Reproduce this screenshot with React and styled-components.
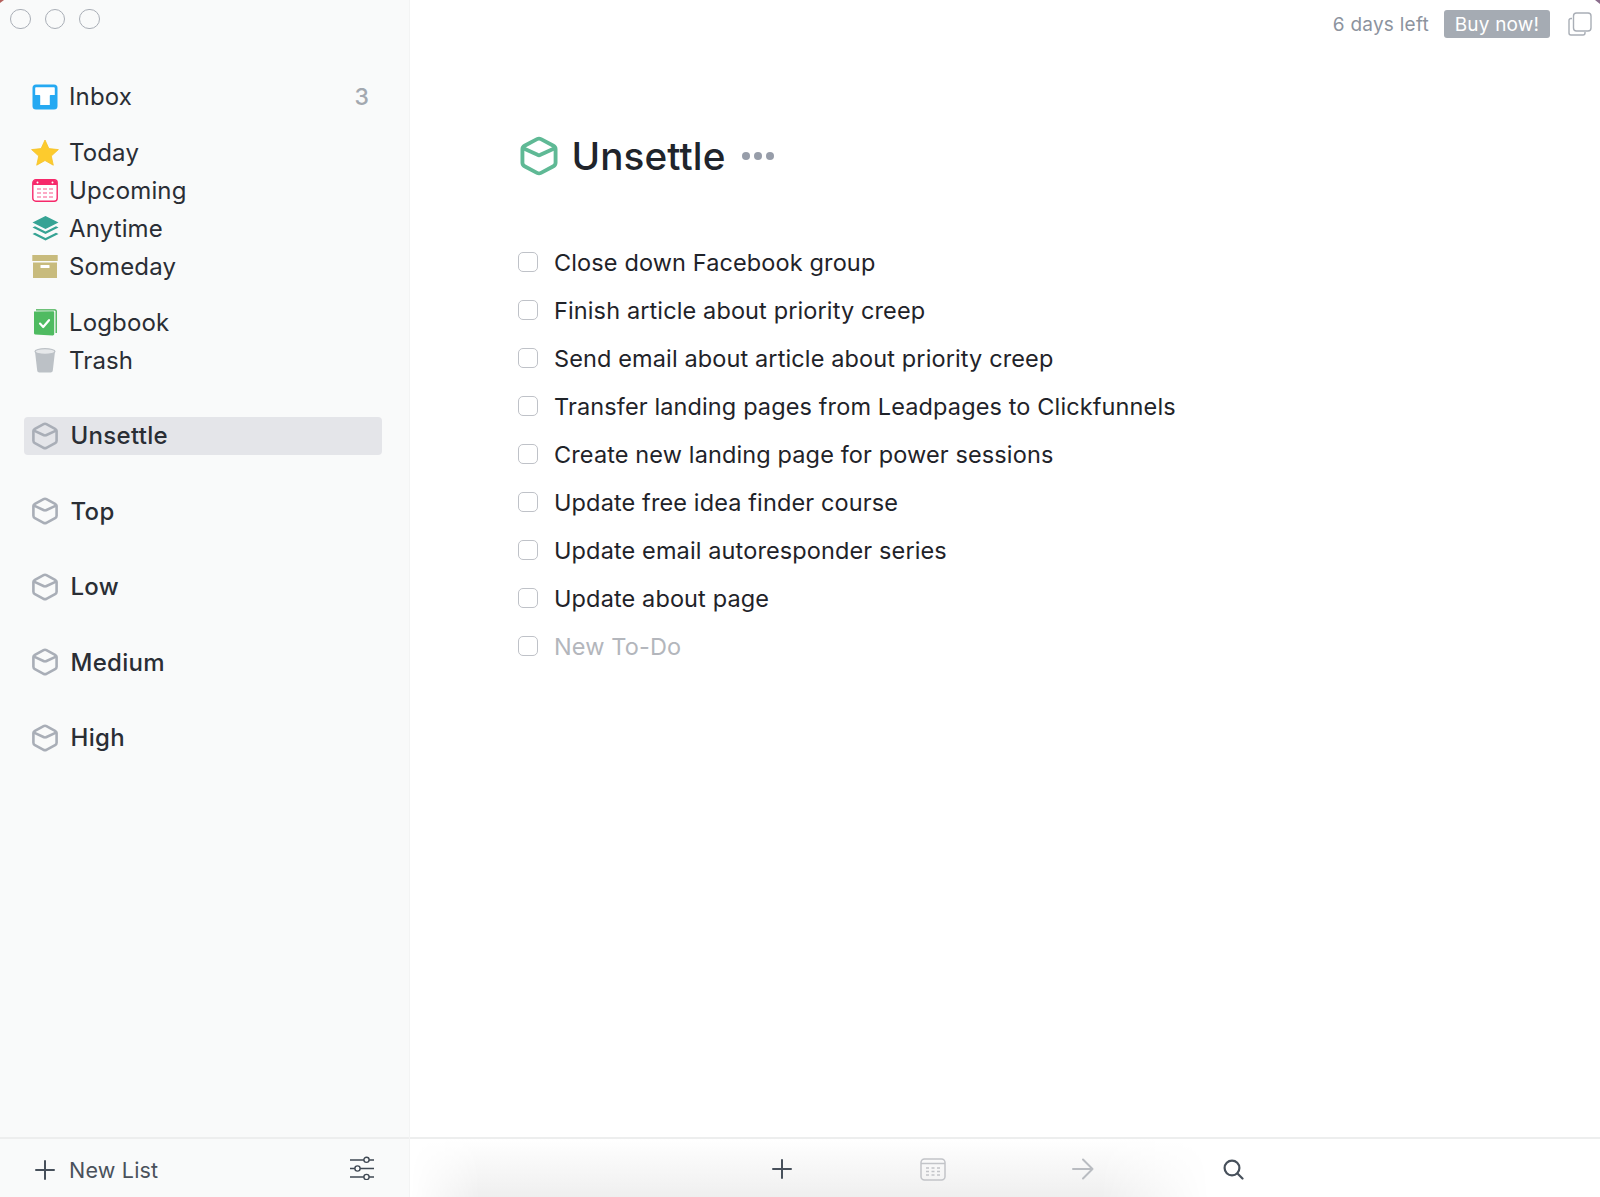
import React from "react";
import styled, { createGlobalStyle } from "styled-components";

const GlobalStyle = createGlobalStyle`
	html, body {
		margin: 0;
		padding: 0;
		background: #ffffff;
	}
	body {
		font-family: Inter, "Noto Sans", "Liberation Sans", sans-serif;
		color: #23272e;
		overflow: hidden;
	}
`;

const Window = styled.div`
	position: relative;
	display: grid;
	grid-template-columns: 410px 1fr;
	width: 1600px;
	height: 1197px;

	&:before,
	&:after {
		content: "";
		position: absolute;
		top: 0;
		width: 0;
		height: 0;
		border-style: solid;
	}
	&:before {
		left: 0;
		border-width: 3px 4px 0 0;
		border-color: #b5605c transparent transparent transparent;
	}
	&:after {
		right: 0;
		border-width: 0 5px 4px 0;
		border-color: transparent #8b6d8c transparent transparent;
	}
`;

const Sidebar = styled.aside`
	display: flex;
	flex-direction: column;
	background: #f9fafa;
	border-right: 1px solid #f3f4f4;
	box-sizing: border-box;
`;

const Lights = styled.div`
	display: flex;
	gap: 14px;
	padding: 8.5px 0 0 10px;
	height: 77.7px;
	box-sizing: border-box;
`;

const Light = styled.span`
	width: 20.5px;
	height: 20.5px;
	box-sizing: border-box;
	border: 1.5px solid #a9aeb6;
	border-radius: 50%;
`;

const Nav = styled.nav`
	flex: 1;
	display: flex;
	flex-direction: column;
	padding: 0 27px 0 24px;
`;

const NavGroup = styled.div`
	display: flex;
	flex-direction: column;
	margin-bottom: ${(p) => p.$gap || 18.5}px;
`;

const NavRow = styled.div`
	display: flex;
	align-items: center;
	height: ${(p) => (p.$list ? 38 : 37.75)}px;
	padding: 0 13px 0 6px;
	border-radius: 4px;
	background: ${(p) => (p.$active ? "#e4e5e9" : "transparent")};
`;

const IconSlot = styled.span`
	display: flex;
	justify-content: center;
	align-items: center;
	width: 30px;
	margin-right: ${(p) => (p.$list ? 10.5 : 9)}px;
`;

const NavLabel = styled.span`
	flex: 1;
	font-size: 24px;
	letter-spacing: ${(p) => (p.$list ? 0.3 : 0.14)}px;
	font-weight: ${(p) => (p.$list ? 500 : 400)};
	color: #2a2e35;
`;

const Count = styled.span`
	font-size: 23px;
	font-weight: 500;
	color: #a3a8af;
`;

const SideFooter = styled.div`
	display: flex;
	align-items: center;
	justify-content: space-between;
	height: 60px;
	box-sizing: border-box;
	border-top: 2px solid #edeeee;
	padding: 0 35px 0 35px;
`;

const NewList = styled.div`
	display: flex;
	align-items: center;
	gap: 14px;
	padding-top: 3px;
	font-size: 21.5px;
	letter-spacing: 0.2px;
	color: #4a515b;
`;

const Main = styled.main`
	display: flex;
	flex-direction: column;
	background: #ffffff;
	min-width: 0;
`;

const TopBar = styled.header`
	display: flex;
	justify-content: flex-end;
	align-items: center;
	height: 48px;
	padding-right: 8px;
	gap: 15px;
`;

const Trial = styled.span`
	font-size: 19px;
	letter-spacing: 0.25px;
	color: #8c939e;
`;

const BuyButton = styled.button`
	width: 106px;
	height: 28px;
	margin-right: 3px;
	border: 0;
	border-radius: 3px;
	padding: 0;
	background: #a5abb3;
	color: #ffffff;
	font-family: inherit;
	font-size: 19px;
	font-weight: 400;
	letter-spacing: 0.2px;
`;

const Content = styled.section`
	flex: 1;
	padding: 88px 0 0 109px;
`;

const TitleRow = styled.div`
	display: flex;
	align-items: center;
	height: 40px;
	margin-bottom: 62px;
`;

const Title = styled.h1`
	margin: 0 16px 0 12.5px;
	font-size: 38.7px;
	font-weight: 500;
	letter-spacing: 0.1px;
	color: #20242b;
`;

const Dots = styled.span`
	display: flex;
	gap: 4px;
`;

const Dot = styled.i`
	width: 8px;
	height: 8px;
	border-radius: 50%;
	background: #979da9;
`;

const TaskList = styled.ul`
	margin: 0;
	padding: 0;
	list-style: none;
`;

const Task = styled.li`
	display: flex;
	align-items: center;
	height: 48px;
	gap: 16px;
	font-size: 23.5px;
	letter-spacing: 0.12px;
	color: ${(p) => (p.$placeholder ? "#b3b6bc" : "#1f2329")};
`;

const Check = styled.span`
	width: 20px;
	height: 20px;
	margin-left: -1px;
	box-sizing: border-box;
	border: 1.8px solid #bfc2c8;
	border-radius: 5px;
	background: #ffffff;
`;

const Toolbar = styled.footer`
	position: relative;
	display: flex;
	align-items: center;
	height: 60px;
	box-sizing: border-box;
	border-top: 2px solid #edeeee;
	padding: 2px 0 0 297px;
	overflow: hidden;

	&:before {
		content: "";
		position: absolute;
		left: 0;
		width: 800px;
		top: 0;
		bottom: 0;
		background: linear-gradient(#ffffff, #efefef);
		mask-image: linear-gradient(to right, transparent, #000 70px, #000 690px, transparent);
	}
`;

const ToolButton = styled.span`
	position: relative;
	display: flex;
	justify-content: center;
	width: 150.5px;
`;

const BoxIcon = ({ size = 28, color = "#a9aeb7", width = 2.6 }) => (
	<svg width={size} height={size} viewBox="0 0 28 28" fill="none" stroke={color} strokeWidth={width} strokeLinejoin="round" strokeLinecap="round">
		<path d="M12.6 2.2c.9-.5 1.9-.5 2.8 0l8.7 4.6c.9.5 1.5 1.4 1.5 2.4v9.6c0 1-.6 1.9-1.5 2.4l-8.7 4.6c-.9.5-1.9.5-2.8 0l-8.7-4.6c-.9-.5-1.5-1.4-1.5-2.4V9.2c0-1 .6-1.9 1.5-2.4Z" />
		<path d="M3 8.6 13 13.2c.6.3 1.4.3 2 0L25 8.6" />
	</svg>
);

const InboxIcon = () => (
	<svg width="26" height="26" viewBox="0 0 26 26">
		<rect x="0.5" y="0.5" width="25" height="25" rx="3.5" fill="#25a9f2" />
		<path d="M3.2 4.2c0-.6.4-1 1-1h17.6c.6 0 1 .4 1 1v6.8h-4.3c-.4 0-.7.3-.7.7v9.3H8.2v-9.3c0-.4-.3-.7-.7-.7H3.2Z" fill="#ffffff" />
	</svg>
);

const StarIcon = () => (
	<svg width="28" height="27" viewBox="0 0 28 27">
		<path d="M14 1 17.9 9.6 27.4 10.6 20.3 17 22.3 26.2 14 21.5 5.7 26.2 7.7 17 .6 10.6 10.1 9.6Z" fill="#fdcb2d" stroke="#f5c228" strokeWidth="0.8" strokeLinejoin="round" />
	</svg>
);

const CalendarIcon = () => (
	<svg width="26" height="23" viewBox="0 0 26 23">
		<rect x="0.8" y="0.8" width="24.4" height="21.4" rx="3" fill="#ffffff" stroke="#f6286a" strokeWidth="1.4" />
		<path d="M1 3.6A3 3 0 0 1 4 1h18a3 3 0 0 1 3 2.6V6H1Z" fill="#f6286a" />
		<g fill="#ffffff">
			<rect x="4.5" y="2.5" width="2" height="2" rx="1" />
			<rect x="19.5" y="2.5" width="2" height="2" rx="1" />
		</g>
		<g fill="#fcaac5">
			<rect x="5" y="9" width="4" height="2" />
			<rect x="11" y="9" width="4" height="2" />
			<rect x="17" y="9" width="4" height="2" />
			<rect x="5" y="13" width="4" height="2" />
			<rect x="11" y="13" width="4" height="2" />
			<rect x="17" y="13" width="4" height="2" />
			<rect x="5" y="17" width="4" height="2" />
			<rect x="11" y="17" width="4" height="2" />
			<rect x="17" y="17" width="4" height="2" />
		</g>
	</svg>
);

const StackIcon = () => (
	<svg width="27" height="25" viewBox="0 0 27 25">
		<path d="M13.5 0 26.5 6.5 13.5 13 .5 6.5Z" fill="#36a394" />
		<path d="M.5 11.5 3 10.2 13.5 15.5 24 10.2 26.5 11.5 13.5 18Z" fill="#36a394" />
		<path d="M.5 18 3 16.7 13.5 22 24 16.7 26.5 18 13.5 24.5Z" fill="#36a394" />
	</svg>
);

const ArchiveIcon = () => (
	<svg width="26" height="23" viewBox="0 0 26 23">
		<rect x="0.3" y="0" width="25.4" height="6" fill="#c8bb7d" />
		<rect x="1" y="7.5" width="24" height="15.5" fill="#c8bb7d" />
		<rect x="8.5" y="10" width="9" height="3" rx="0.6" fill="#ffffff" />
	</svg>
);

const LogbookIcon = () => (
	<svg width="24" height="27" viewBox="0 0 24 27">
		<path d="M3 .8h19c.7 0 1.2.5 1.2 1.2v22" fill="none" stroke="#3fae4e" strokeWidth="1.3" />
		<path d="M1 2.5 20 2.2c.7 0 1.2.5 1.2 1.2V25c0 .9-.8 1.5-1.6 1.4L2 25.4c-.6-.1-1-.5-1-1.1Z" fill="#4fbb61" />
		<path d="M7 14.6 10.2 18 16 11.2" fill="none" stroke="#ffffff" strokeWidth="2.2" strokeLinecap="round" strokeLinejoin="round" />
	</svg>
);

const TrashIcon = () => (
	<svg width="22" height="25" viewBox="0 0 22 25">
		<path d="M1 3.5 3.2 22.5c.1 1.2 1 2 2.2 2h11.2c1.2 0 2.1-.8 2.2-2L21 3.5Z" fill="#bcc1c6" />
		<ellipse cx="11" cy="3.5" rx="10" ry="2.8" fill="#e6e8ea" stroke="#bcc1c6" strokeWidth="1.2" />
	</svg>
);

const PlusIcon = ({ size = 20, color = "#47505b" }) => (
	<svg width={size} height={size} viewBox="0 0 20 20" stroke={color} strokeWidth="2" strokeLinecap="round">
		<path d="M10 1v18M1 10h18" />
	</svg>
);

const FiltersIcon = () => (
	<svg width="24" height="24" viewBox="0 0 24 24" fill="#f9fafa" stroke="#3f4853" strokeWidth="1.4">
		<path d="M0 4h24M0 12.5h24M0 21h24" />
		<circle cx="16.5" cy="3.8" r="2.6" />
		<circle cx="7.5" cy="12.5" r="2.6" />
		<circle cx="16.5" cy="21" r="2.6" />
	</svg>
);

const TinyCalendarIcon = () => (
	<svg width="26" height="23" viewBox="0 0 26 23" fill="none" stroke="#c2c4c8" strokeWidth="1.5">
		<rect x="1" y="1" width="24" height="21" rx="3.5" />
		<path d="M1 5.5h24" />
		<path d="M6 10h3M11.5 10h3M17 10h3M6 13.5h3M11.5 13.5h3M17 13.5h3M6 17h3M11.5 17h3M17 17h3" strokeWidth="1.6" />
	</svg>
);

const ArrowIcon = () => (
	<svg width="22" height="22" viewBox="0 0 22 22" fill="none" stroke="#b9bcc1" strokeWidth="2" strokeLinecap="round" strokeLinejoin="round">
		<path d="M1 11h19.5M11 1.5 20.5 11 11 20.5" />
	</svg>
);

const SearchIcon = () => (
	<svg width="21" height="21" viewBox="0 0 21 21" fill="none" stroke="#47505b" strokeWidth="2.2" strokeLinecap="round">
		<circle cx="9" cy="9" r="7.4" />
		<path d="M14.5 14.5 19.5 19.5" />
	</svg>
);

const CopyIcon = () => (
	<svg width="24" height="24" viewBox="0 0 24 24" fill="none" stroke="#a9aeb6" strokeWidth="1.4">
		<path d="M4 6.5H3A2 2 0 0 0 1 8.5v12.5a2 2 0 0 0 2 2h12a2 2 0 0 0 2-2v-1" />
		<rect x="5.5" y="1" width="17.5" height="18" rx="3" />
	</svg>
);

const primary = [
	{ group: [{ label: "Inbox", icon: <InboxIcon />, count: 3 }] },
	{
		group: [
			{ label: "Today", icon: <StarIcon /> },
			{ label: "Upcoming", icon: <CalendarIcon /> },
			{ label: "Anytime", icon: <StackIcon /> },
			{ label: "Someday", icon: <ArchiveIcon /> },
		],
	},
	{
		group: [
			{ label: "Logbook", icon: <LogbookIcon /> },
			{ label: "Trash", icon: <TrashIcon /> },
		],
		gap: 38,
	},
];

const lists = ["Unsettle", "Top", "Low", "Medium", "High"];

const tasks = [
	"Close down Facebook group",
	"Finish article about priority creep",
	"Send email about article about priority creep",
	"Transfer landing pages from Leadpages to Clickfunnels",
	"Create new landing page for power sessions",
	"Update free idea finder course",
	"Update email autoresponder series",
	"Update about page",
];

const App = () => {
	return (
		<>
			<GlobalStyle />
			<Window>
				<Sidebar>
					<Lights>
						<Light />
						<Light />
						<Light />
					</Lights>
					<Nav>
						{primary.map(({ group, gap }, i) => (
							<NavGroup key={i} $gap={gap}>
								{group.map(({ label, icon, count }) => (
									<NavRow key={label}>
										<IconSlot>{icon}</IconSlot>
										<NavLabel>{label}</NavLabel>
										{count && <Count>{count}</Count>}
									</NavRow>
								))}
							</NavGroup>
						))}
						{lists.map((name, i) => (
							<NavGroup key={name} $gap={37.5}>
								<NavRow $list $active={i === 0}>
									<IconSlot $list>
										<BoxIcon />
									</IconSlot>
									<NavLabel $list>{name}</NavLabel>
								</NavRow>
							</NavGroup>
						))}
					</Nav>
					<SideFooter>
						<NewList>
							<PlusIcon />
							New List
						</NewList>
						<FiltersIcon />
					</SideFooter>
				</Sidebar>
				<Main>
					<TopBar>
						<Trial>6 days left</Trial>
						<BuyButton>Buy now!</BuyButton>
						<CopyIcon />
					</TopBar>
					<Content>
						<TitleRow>
							<BoxIcon size={40} color="#5fb995" width={2.7} />
							<Title>Unsettle</Title>
							<Dots>
								<Dot />
								<Dot />
								<Dot />
							</Dots>
						</TitleRow>
						<TaskList>
							{tasks.map((task) => (
								<Task key={task}>
									<Check />
									{task}
								</Task>
							))}
							<Task $placeholder>
								<Check />
								New To-Do
							</Task>
						</TaskList>
					</Content>
					<Toolbar>
						<ToolButton>
							<PlusIcon />
						</ToolButton>
						<ToolButton>
							<TinyCalendarIcon />
						</ToolButton>
						<ToolButton>
							<ArrowIcon />
						</ToolButton>
						<ToolButton>
							<SearchIcon />
						</ToolButton>
					</Toolbar>
				</Main>
			</Window>
		</>
	);
};

export default App;
